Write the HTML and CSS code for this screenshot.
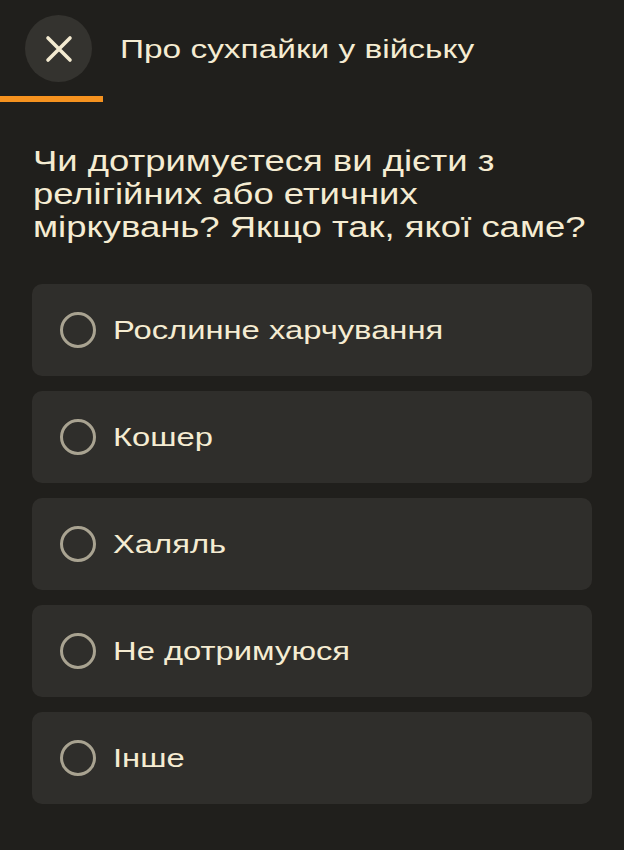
FILE: index.html
```html
<!DOCTYPE html>
<html lang="uk">
<head>
<meta charset="utf-8">
<link rel="stylesheet" href="styles.css">
</head>
<body>
<div class="page">
  <header class="header">
    <button class="close" aria-label="Закрити">
      <svg width="28" height="28" viewBox="0 0 28 28"><path d="M3 3L25 25M25 3L3 25" stroke="#f3ead0" stroke-width="3.6" stroke-linecap="round"/></svg>
    </button>
    <div class="title">Про сухпайки у війську</div>
  </header>
  <div class="progress"></div>
  <h1 class="question">Чи дотримуєтеся ви дієти з релігійних або етичних міркувань? Якщо так, якої саме?</h1>
  <div class="options">
    <div class="option"><span class="radio"></span><span class="label">Рослинне харчування</span></div>
    <div class="option"><span class="radio"></span><span class="label">Кошер</span></div>
    <div class="option"><span class="radio"></span><span class="label">Халяль</span></div>
    <div class="option"><span class="radio"></span><span class="label">Не дотримуюся</span></div>
    <div class="option"><span class="radio"></span><span class="label">Інше</span></div>
  </div>
</div>
</body>
</html>
```

FILE: styles.css
```css
html, body {
  margin: 0;
  padding: 0;
  background: #201f1c;
}
body {
  width: 624px;
  height: 850px;
  overflow: hidden;
  font-family: "Liberation Sans", Arial, sans-serif;
  color: #f5ecd2;
}
.page {
  display: flex;
  flex-direction: column;
}
.header {
  display: flex;
  align-items: center;
  padding: 15px 0 0 25px;
  height: 67px;
}
.close {
  width: 67px;
  height: 67px;
  border-radius: 50%;
  border: none;
  background: #34332f;
  display: flex;
  align-items: center;
  justify-content: center;
  padding: 0;
  flex-shrink: 0;
}
.title {
  margin-left: 28px;
  font-size: 26px;
  color: #f5ecd2;
  margin-top: 2px;
  white-space: nowrap;
  transform: scaleX(1.285);
  transform-origin: left center;
}
.progress {
  width: 103px;
  height: 6px;
  background: #f5921f;
  margin-top: 14px;
}
.question {
  margin: 42px 0 0 33px;
  width: 470px;
  font-size: 30px;
  font-weight: normal;
  line-height: 33px;
  color: #f5ecd2;
  transform: scaleX(1.215);
  transform-origin: left center;
}
.options {
  display: flex;
  flex-direction: column;
  gap: 15px;
  margin: 41px 32px 0 32px;
}
.option {
  height: 92px;
  background: #2f2e2b;
  border-radius: 10px;
  display: flex;
  align-items: center;
  padding-left: 28px;
  box-sizing: border-box;
}
.radio {
  width: 36px;
  height: 36px;
  box-sizing: border-box;
  border: 3px solid #a9a391;
  border-radius: 50%;
  flex-shrink: 0;
}
.label {
  display: inline-block;
  margin-left: 17px;
  font-size: 26px;
  color: #f5ecd2;
  white-space: nowrap;
  transform: scaleX(1.26);
  transform-origin: left center;
}
```
